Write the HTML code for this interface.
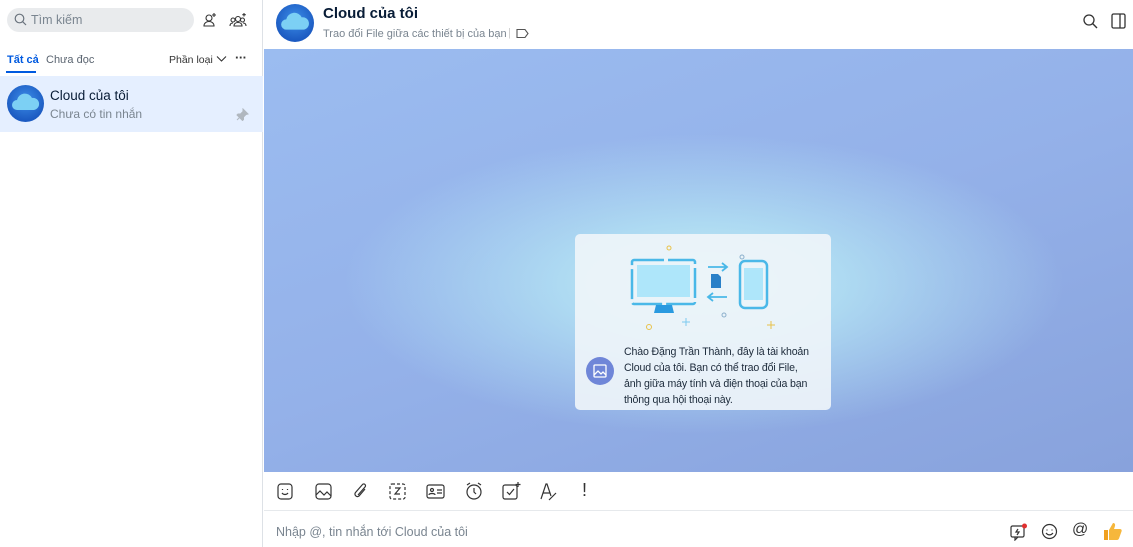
<!DOCTYPE html>
<html><head><meta charset="utf-8"><style>
*{box-sizing:border-box;margin:0;padding:0}
body{width:1133px;height:547px;overflow:hidden;font-family:"Liberation Sans",sans-serif;background:#fff;position:relative;color:#081c36}
.side{position:absolute;left:0;top:0;width:263px;height:547px;border-right:1px solid #dde1e6;background:#fff}
.search{position:absolute;left:7px;top:8px;width:187px;height:24px;border-radius:12px;background:#e9ebed;font-size:12.5px;color:#7a8590;line-height:24px;padding-left:24px}
.tabs{position:absolute;top:54px;font-size:11px}
.row{position:absolute;left:0;top:76px;width:263px;height:56px;background:#e5efff}
.avatar{border-radius:50%;background:radial-gradient(circle at 50% 40%,#3d8ee8,#1c5bc2 70%);position:absolute}
.main{position:absolute;left:264px;top:0;right:0;height:547px}
.chat{position:absolute;left:0;top:49px;right:0;height:423px;background:
radial-gradient(ellipse 360px 150px at 440px 235px,rgba(195,236,246,1) 0%,rgba(180,228,244,.8) 40%,rgba(170,210,240,0) 100%),
linear-gradient(160deg,#9bbcf0 0%,#94b1e9 50%,#88a2dc 100%)}
.card{position:absolute;left:311px;top:185px;width:256px;height:176px;border-radius:5px;background:rgba(240,245,250,.9)}
.ico{position:absolute;top:482px}
</style></head><body>
<div class="side">
 <div class="search">Tìm kiếm</div>
 <svg style="position:absolute;left:14px;top:13px" width="13" height="13" viewBox="0 0 13 13"><circle cx="5.5" cy="5.5" r="4.3" fill="none" stroke="#6a737d" stroke-width="1.2"/><path d="M8.7 8.7L12 12" stroke="#6a737d" stroke-width="1.2"/></svg>
 <svg style="position:absolute;left:202px;top:12px" width="16" height="16" viewBox="0 0 16 16" fill="none" stroke="#333" stroke-width="1.1"><circle cx="7" cy="6" r="3"/><path d="M2 14c0-3 2.5-4.5 5-4.5s5 1.5 5 4.5z"/><path d="M12 1v4M10 3h4"/></svg>
 <svg style="position:absolute;left:229px;top:12px" width="18" height="16" viewBox="0 0 18 16" fill="none" stroke="#333" stroke-width="1.1"><circle cx="9" cy="7" r="2.5"/><circle cx="4" cy="8" r="2"/><circle cx="13.5" cy="8" r="2"/><path d="M5 14c0-2.5 2-3.5 4-3.5s4 1 4 3.5zM1 14c0-2 1.3-3 3-3M17 14c0-2-1.3-3-3-3"/><path d="M15 1v3.5M13.3 2.7h3.5"/></svg>
 <div class="tabs" style="left:7px;color:#005ae0;font-weight:bold">Tất cả</div>
 <div style="position:absolute;left:6px;top:71px;width:30px;height:2px;background:#005ae0"></div>
 <div class="tabs" style="left:46px;color:#5a6470">Chưa đọc</div>
 <div class="tabs" style="left:169px;color:#333;font-size:10.5px">Phần loại</div>
 <svg style="position:absolute;left:216px;top:55px" width="11" height="8" viewBox="0 0 11 8"><path d="M1 1.5l4.5 4.5 4.5-4.5" fill="none" stroke="#333" stroke-width="1.1"/></svg>
 <div style="position:absolute;left:235px;top:50px;font-size:13px;font-weight:bold;color:#333;letter-spacing:-.5px">···</div>
 <div class="row">
  <div class="avatar" style="left:7px;top:9px;width:37px;height:37px"><svg width="37" height="37" viewBox="0 0 37 37"><path d="M10 25a5 5 0 0 1 0-10a8 8 0 0 1 15-2a6 6 0 0 1 2 12z" fill="#7cd0f4"/></svg></div>
  <div style="position:absolute;left:50px;top:12px;font-size:13.5px;color:#081c36">Cloud của tôi</div>
  <div style="position:absolute;left:50px;top:31px;font-size:12px;color:#7a8590">Chưa có tin nhắn</div>
  <svg style="position:absolute;left:236px;top:32px" width="13" height="13" viewBox="0 0 13 13"><path d="M7 1l5 5-2 0.5-2.5 2.5 0 2.5-1 1-5.5-5.5 1-1 2.5 0 2.5-2.5z M4 9l-3 3" fill="#b0b7bf" stroke="#b0b7bf"/></svg>
 </div>
</div>
<div class="main">
 <div class="avatar" style="left:12px;top:4px;width:38px;height:38px"><svg width="38" height="38" viewBox="0 0 37 37"><path d="M10 25a5 5 0 0 1 0-10a8 8 0 0 1 15-2a6 6 0 0 1 2 12z" fill="#7cd0f4"/></svg></div>
 <div style="position:absolute;left:59px;top:5px;font-size:15px;font-weight:bold;color:#081c36">Cloud của tôi</div>
 <div style="position:absolute;left:59px;top:28px;font-size:11px;color:#7a8590;white-space:nowrap">Trao đổi File giữa các thiết bị của bạn</div>
 <div style="position:absolute;left:244px;top:27px;font-size:11px;color:#ccc">|</div>
 <svg style="position:absolute;left:252px;top:28px" width="13" height="11" viewBox="0 0 13 11"><path d="M1 1.5h8l3 4-3 4H1z" fill="none" stroke="#555" stroke-width="1.1"/></svg>
 <svg style="position:absolute;left:819px;top:14px" width="15" height="15" viewBox="0 0 15 15"><circle cx="6" cy="6" r="5" fill="none" stroke="#333" stroke-width="1.3"/><path d="M9.8 9.8L14 14" stroke="#333" stroke-width="1.4"/></svg>
 <svg style="position:absolute;left:847px;top:13px" width="15" height="16" viewBox="0 0 15 16" fill="none" stroke="#333" stroke-width="1.3"><rect x="1" y="1" width="13" height="14" rx="1.5"/><path d="M9 1v14"/></svg>
 <div class="chat">
  <div class="card">
   <svg width="256" height="110" viewBox="0 0 256 110" fill="none">
    <circle cx="94" cy="14" r="2" stroke="#e8c24a"/><circle cx="74" cy="93" r="2.5" stroke="#e8c24a"/><path d="M196 87v8M192 91h8" stroke="#e8c24a"/>
    <circle cx="167" cy="23" r="2" stroke="#8cb0cc"/><circle cx="149" cy="81" r="2" stroke="#8cb0cc"/><path d="M111 84v8M107 88h8" stroke="#7ccaf0"/>
    <rect x="57" y="26" width="63" height="44" rx="2" stroke="#4ab8e8" stroke-width="2.5" stroke-dasharray="30 4"/>
    <rect x="62" y="31" width="53" height="32" fill="#aee6fa"/>
    <path d="M81 71h16l2 8H79z" fill="#2a9ae0"/>
    <rect x="165" y="27" width="27" height="47" rx="5" stroke="#4ab8e8" stroke-width="2.5"/>
    <rect x="169" y="34" width="19" height="32" fill="#aee6fa"/>
    <path d="M133 33h19M147 29l5 4-5 4M152 63h-19M138 59l-5 4 5 4" stroke="#4ab8e8" stroke-width="1.8"/>
    <path d="M136 40h7l3 3v11h-10z" fill="#2a80c8"/>
   </svg>
   <div style="position:absolute;left:11px;top:123px;width:28px;height:28px;border-radius:50%;background:#6f86d8">
    <svg width="28" height="28" viewBox="0 0 28 28" fill="none" stroke="#fff" stroke-width="1.3"><rect x="8" y="8" width="12" height="12" rx="1"/><path d="M8 18l4-4 3 3 2-2 3 3"/></svg></div>
   <div style="position:absolute;left:49px;top:110px;font-size:10.6px;line-height:16px;color:#1c2a3a;white-space:nowrap;letter-spacing:-0.15px">Chào Đặng Trần Thành, đây là tài khoản<br>Cloud của tôi. Bạn có thể trao đổi File,<br>ảnh giữa máy tính và điện thoại của bạn<br>thông qua hội thoại này.</div>
  </div>
 </div>
 <div style="position:absolute;left:0;right:0;top:510px;height:1px;background:#e6e9ec"></div>
 <svg class="ico" style="left:13px" width="300" height="20" viewBox="0 0 300 20" fill="none" stroke="#333" stroke-width="1.2">
  <rect x="1" y="2" width="14" height="15" rx="3"/><path d="M5 11c1.5 2 4.5 2 6 0M5.5 7v1M10.5 7v1"/>
  <g transform="translate(38 0)"><rect x="1" y="2" width="15" height="15" rx="3"/><path d="M1 13l4-4 4 4 3-3 4 4"/></g>
  <g transform="translate(75 0)"><path d="M13 7l-6 7a2.5 2.5 0 0 1-3.5-3.5l7-8a1.7 1.7 0 0 1 2.5 2.5l-7 8"/></g>
  <g transform="translate(112 0)"><rect x="1" y="2" width="15" height="15" rx="2" stroke-dasharray="3 2"/><path d="M6 6h5l-5 6h5"/></g>
  <g transform="translate(149 0)"><rect x="1" y="3" width="17" height="13" rx="2"/><circle cx="6" cy="8" r="1.5"/><path d="M3 13c0-2 6-2 6 0M11 8h5M11 11h5"/></g>
  <g transform="translate(188 0)"><circle cx="9" cy="10" r="7"/><path d="M9 6v4l2 2M2 3l3-2M16 3l-3-2"/></g>
  <g transform="translate(225 0)"><rect x="1" y="3" width="14" height="14" rx="2"/><path d="M5 10l2.5 2.5L12 7M16 0v5M13.5 2.5h5"/></g>
  <g transform="translate(262 0)"><path d="M2 17L7 2h1l4 12M4 11h7M10 18l7-7"/></g>
 </svg>
 <div style="position:absolute;left:318px;top:480px;font-size:18px;color:#333">!</div>
 <div style="position:absolute;left:12px;top:525px;font-size:12.5px;color:#7a8590">Nhập @, tin nhắn tới Cloud của tôi</div>
 <svg style="position:absolute;left:746px;top:523px" width="18" height="18" viewBox="0 0 18 18" fill="none" stroke="#333" stroke-width="1.2"><rect x="1" y="3" width="13" height="11" rx="1.5"/><path d="M5 14v3l3-3M8 6l-2 3h3l-2 3"/><circle cx="14.5" cy="3" r="2.5" fill="#e03030" stroke="none"/></svg>
 <svg style="position:absolute;left:777px;top:523px" width="17" height="17" viewBox="0 0 17 17" fill="none" stroke="#333" stroke-width="1.2"><circle cx="8.5" cy="8.5" r="7"/><path d="M5 10c2 2.5 5 2.5 7 0M6 6.5v1M11 6.5v1"/></svg>
 <div style="position:absolute;left:808px;top:521px;font-size:16px;color:#333">@</div>
 <svg style="position:absolute;left:838px;top:520px" width="22" height="22" viewBox="0 0 22 22"><path d="M2 10h4v10H2z" fill="#f0a020"/><path d="M7 10l4-7c1.5 0 2.5 1 2 3l-1 3h6c1.5 0 2 1.5 1.5 2.5l-2.5 7c-.5 1-1 1.5-2 1.5H7z" fill="#f6b73c"/></svg>
</div>
</body></html>
